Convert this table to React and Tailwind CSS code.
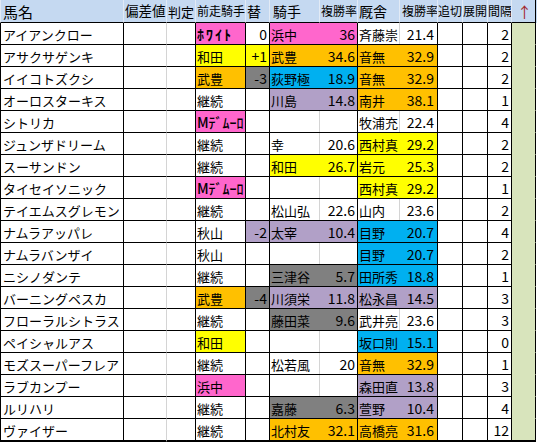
const P = "bg-[#ff66cc]";
const Y = "bg-[#ffff00]";
const O = "bg-[#ffc000]";
const G = "bg-[#808080]";
const B = "bg-[#00b0f0]";
const V = "bg-[#b1a0c7]";

// name, prev jockey, prev bg, change, change bg, jockey, rate, jockey bg, trainer, rate, trainer bg, interval
const rows = [
  ["アイアンクロー", "ﾎﾜｲﾄ", P, "0", "", "浜中", "36", P, "斉藤崇", "21.4", "", "2"],
  ["アサクサゲンキ", "和田", Y, "+1", Y, "武豊", "34.6", O, "音無", "32.9", O, "2"],
  ["イイコトズクシ", "武豊", O, "-3", G, "荻野極", "18.9", B, "音無", "32.9", O, "2"],
  ["オーロスターキス", "継続", "", "", "", "川島", "14.8", V, "南井", "38.1", O, "1"],
  ["シトリカ", "Mﾃﾞﾑｰﾛ", P, "", "", "", "", "", "牧浦充", "22.4", "", "4"],
  ["ジュンザドリーム", "継続", "", "", "", "幸", "20.6", "", "西村真", "29.2", Y, "2"],
  ["スーサンドン", "継続", "", "", "", "和田", "26.7", Y, "岩元", "25.3", Y, "2"],
  ["タイセイソニック", "Mﾃﾞﾑｰﾛ", P, "", "", "", "", "", "西村真", "29.2", Y, "1"],
  ["テイエムスグレモン", "継続", "", "", "", "松山弘", "22.6", "", "山内", "23.6", "", "2"],
  ["ナムラアッパレ", "秋山", "", "-2", V, "太宰", "10.4", V, "目野", "20.7", B, "4"],
  ["ナムラバンザイ", "秋山", "", "", "", "", "", "", "目野", "20.7", B, "2"],
  ["ニシノダンテ", "継続", "", "", "", "三津谷", "5.7", G, "田所秀", "18.8", B, "1"],
  ["バーニングペスカ", "武豊", O, "-4", G, "川須栄", "11.8", V, "松永昌", "14.5", V, "3"],
  ["フローラルシトラス", "継続", "", "", "", "藤田菜", "9.6", G, "武井亮", "23.6", "", "3"],
  ["ペイシャルアス", "和田", Y, "", "", "", "", "", "坂口則", "15.1", B, "0"],
  ["モズスーパーフレア", "継続", "", "", "", "松若風", "20", "", "音無", "32.9", O, "1"],
  ["ラブカンプー", "浜中", P, "", "", "", "", "", "森田直", "13.8", V, "3"],
  ["ルリハリ", "継続", "", "", "", "嘉藤", "6.3", G, "萱野", "10.4", V, "4"],
  ["ヴァイザー", "継続", "", "", "", "北村友", "32.1", O, "高橋亮", "31.6", O, "12"],
];

function Row({ r, last }) {
  const [name, prev, prevBg, chg, chgBg, jk, jkRate, jkBg, tr, trRate, trBg, gap] = r;
  const bb = last ? "border-b-2" : "border-b";
  // half-width katakana cells render a bit heavier in the sheet
  const half = prev.includes("ﾎ")
    ? "text-[14px] font-bold tracking-[2px]"
    : prev.startsWith("M")
    ? "text-[14px] font-medium"
    : "";
  return (
    <div className={`flex ${last ? "h-[23px]" : "h-[22px]"} text-[13px] leading-none text-black whitespace-nowrap`}>
      <div className={`w-[124px] shrink-0 flex items-center pl-[2px] pt-[1px] border-l border-r ${bb} border-black bg-white overflow-hidden`}>
        {name}
      </div>
      <div className={`w-[43px] shrink-0 border-r ${bb} border-r-[#d4d4d4] border-b-black bg-white`} />
      <div className={`w-[29px] shrink-0 border-r ${bb} border-black bg-white`} />
      <div className={`w-[50px] shrink-0 flex items-center pl-[1px] pt-[1px] border-r ${bb} border-black overflow-hidden ${prevBg || "bg-white"} ${half}`}>
        {prev}
      </div>
      <div className={`w-[24px] shrink-0 flex items-center justify-end pr-[2px] pt-[1px] text-[14px] border-r ${bb} border-black ${chgBg || "bg-white"}`}>
        {chg}
      </div>
      <div className={`flex shrink-0 border-r ${bb} border-black ${jkBg || "bg-white"}`}>
        <div className={`w-[50px] flex items-center pl-[1px] pt-[1px] ${jkBg ? "" : "border-r border-[#d4d4d4]"}`}>
          {jk}
        </div>
        <div className="w-[37px] flex items-center justify-end pr-[2px] pt-[1px] text-[14px]">{jkRate}</div>
      </div>
      <div className={`flex shrink-0 border-r ${bb} border-black ${trBg || "bg-white"}`}>
        <div className={`w-[42px] flex items-center pl-[1px] pt-[1px] ${trBg ? "" : "border-r border-[#d4d4d4]"}`}>
          {tr}
        </div>
        <div className="w-[37px] flex items-center justify-end pr-[3px] pt-[1px] text-[14px]">{trRate}</div>
      </div>
      <div className={`w-[25px] shrink-0 border-r ${bb} border-black bg-white`} />
      <div className={`w-[25px] shrink-0 border-r ${bb} border-black bg-white`} />
      <div className={`w-[24px] shrink-0 flex items-center justify-end pr-[2px] pt-[1px] text-[14px] border-r ${bb} border-black bg-white`}>
        {gap}
      </div>
      <div
        className={`w-[24px] shrink-0 border-r ${bb} border-r-black ${
          last ? "border-b-black" : "border-b-[#d8e4bc]"
        } bg-[#d8e4bc]`}
      />
    </div>
  );
}

const headers = [
  ["馬名", "w-[124px] border-l text-[15px] pl-[2px]"],
  ["偏差値", "w-[43px] text-[13.5px] pl-[1px]"],
  ["判定", "w-[29px] text-[13px] pl-[1px]"],
  ["前走騎手", "w-[50px] text-[12px] pl-[1px]"],
  ["替", "w-[24px] text-[14px] pl-[1px]"],
  ["騎手", "w-[50px] text-[14px] pl-[3px]"],
  ["複勝率", "w-[38px] text-[12px] pl-[1px]"],
  ["厩舎", "w-[42px] text-[14px] pl-[1px]"],
  ["複勝率", "w-[38px] text-[12px] pl-[2px]"],
  ["追切", "w-[25px] text-[12px] pl-[0px]"],
  ["展開", "w-[25px] text-[12px] pl-[0px]"],
  ["間隔", "w-[24px] text-[12px] pl-[0px]"],
];

export default function App() {
  return (
    <div className="w-[537px] h-[444px] bg-white overflow-hidden font-['Noto_Sans_CJK_JP','Noto_Sans',sans-serif]">
      <div className="flex h-[23px] bg-[#c5d9f1] leading-none text-black whitespace-nowrap">
        {headers.map(([t, c], i) => (
          <div
            key={i}
            className={`${c} shrink-0 flex items-center overflow-hidden border-r border-b border-r-[#e2eaf5] border-b-black border-l-[#e2eaf5]`}
          >
            {t}
          </div>
        ))}
        <div className="w-[24px] shrink-0 flex items-center pl-[5px] text-[15px] text-[#a3282b] border-r border-b border-r-black border-b-black">
          ↑
        </div>
      </div>
      {rows.map((r, i) => (
        <Row key={i} r={r} last={i === rows.length - 1} />
      ))}
    </div>
  );
}
